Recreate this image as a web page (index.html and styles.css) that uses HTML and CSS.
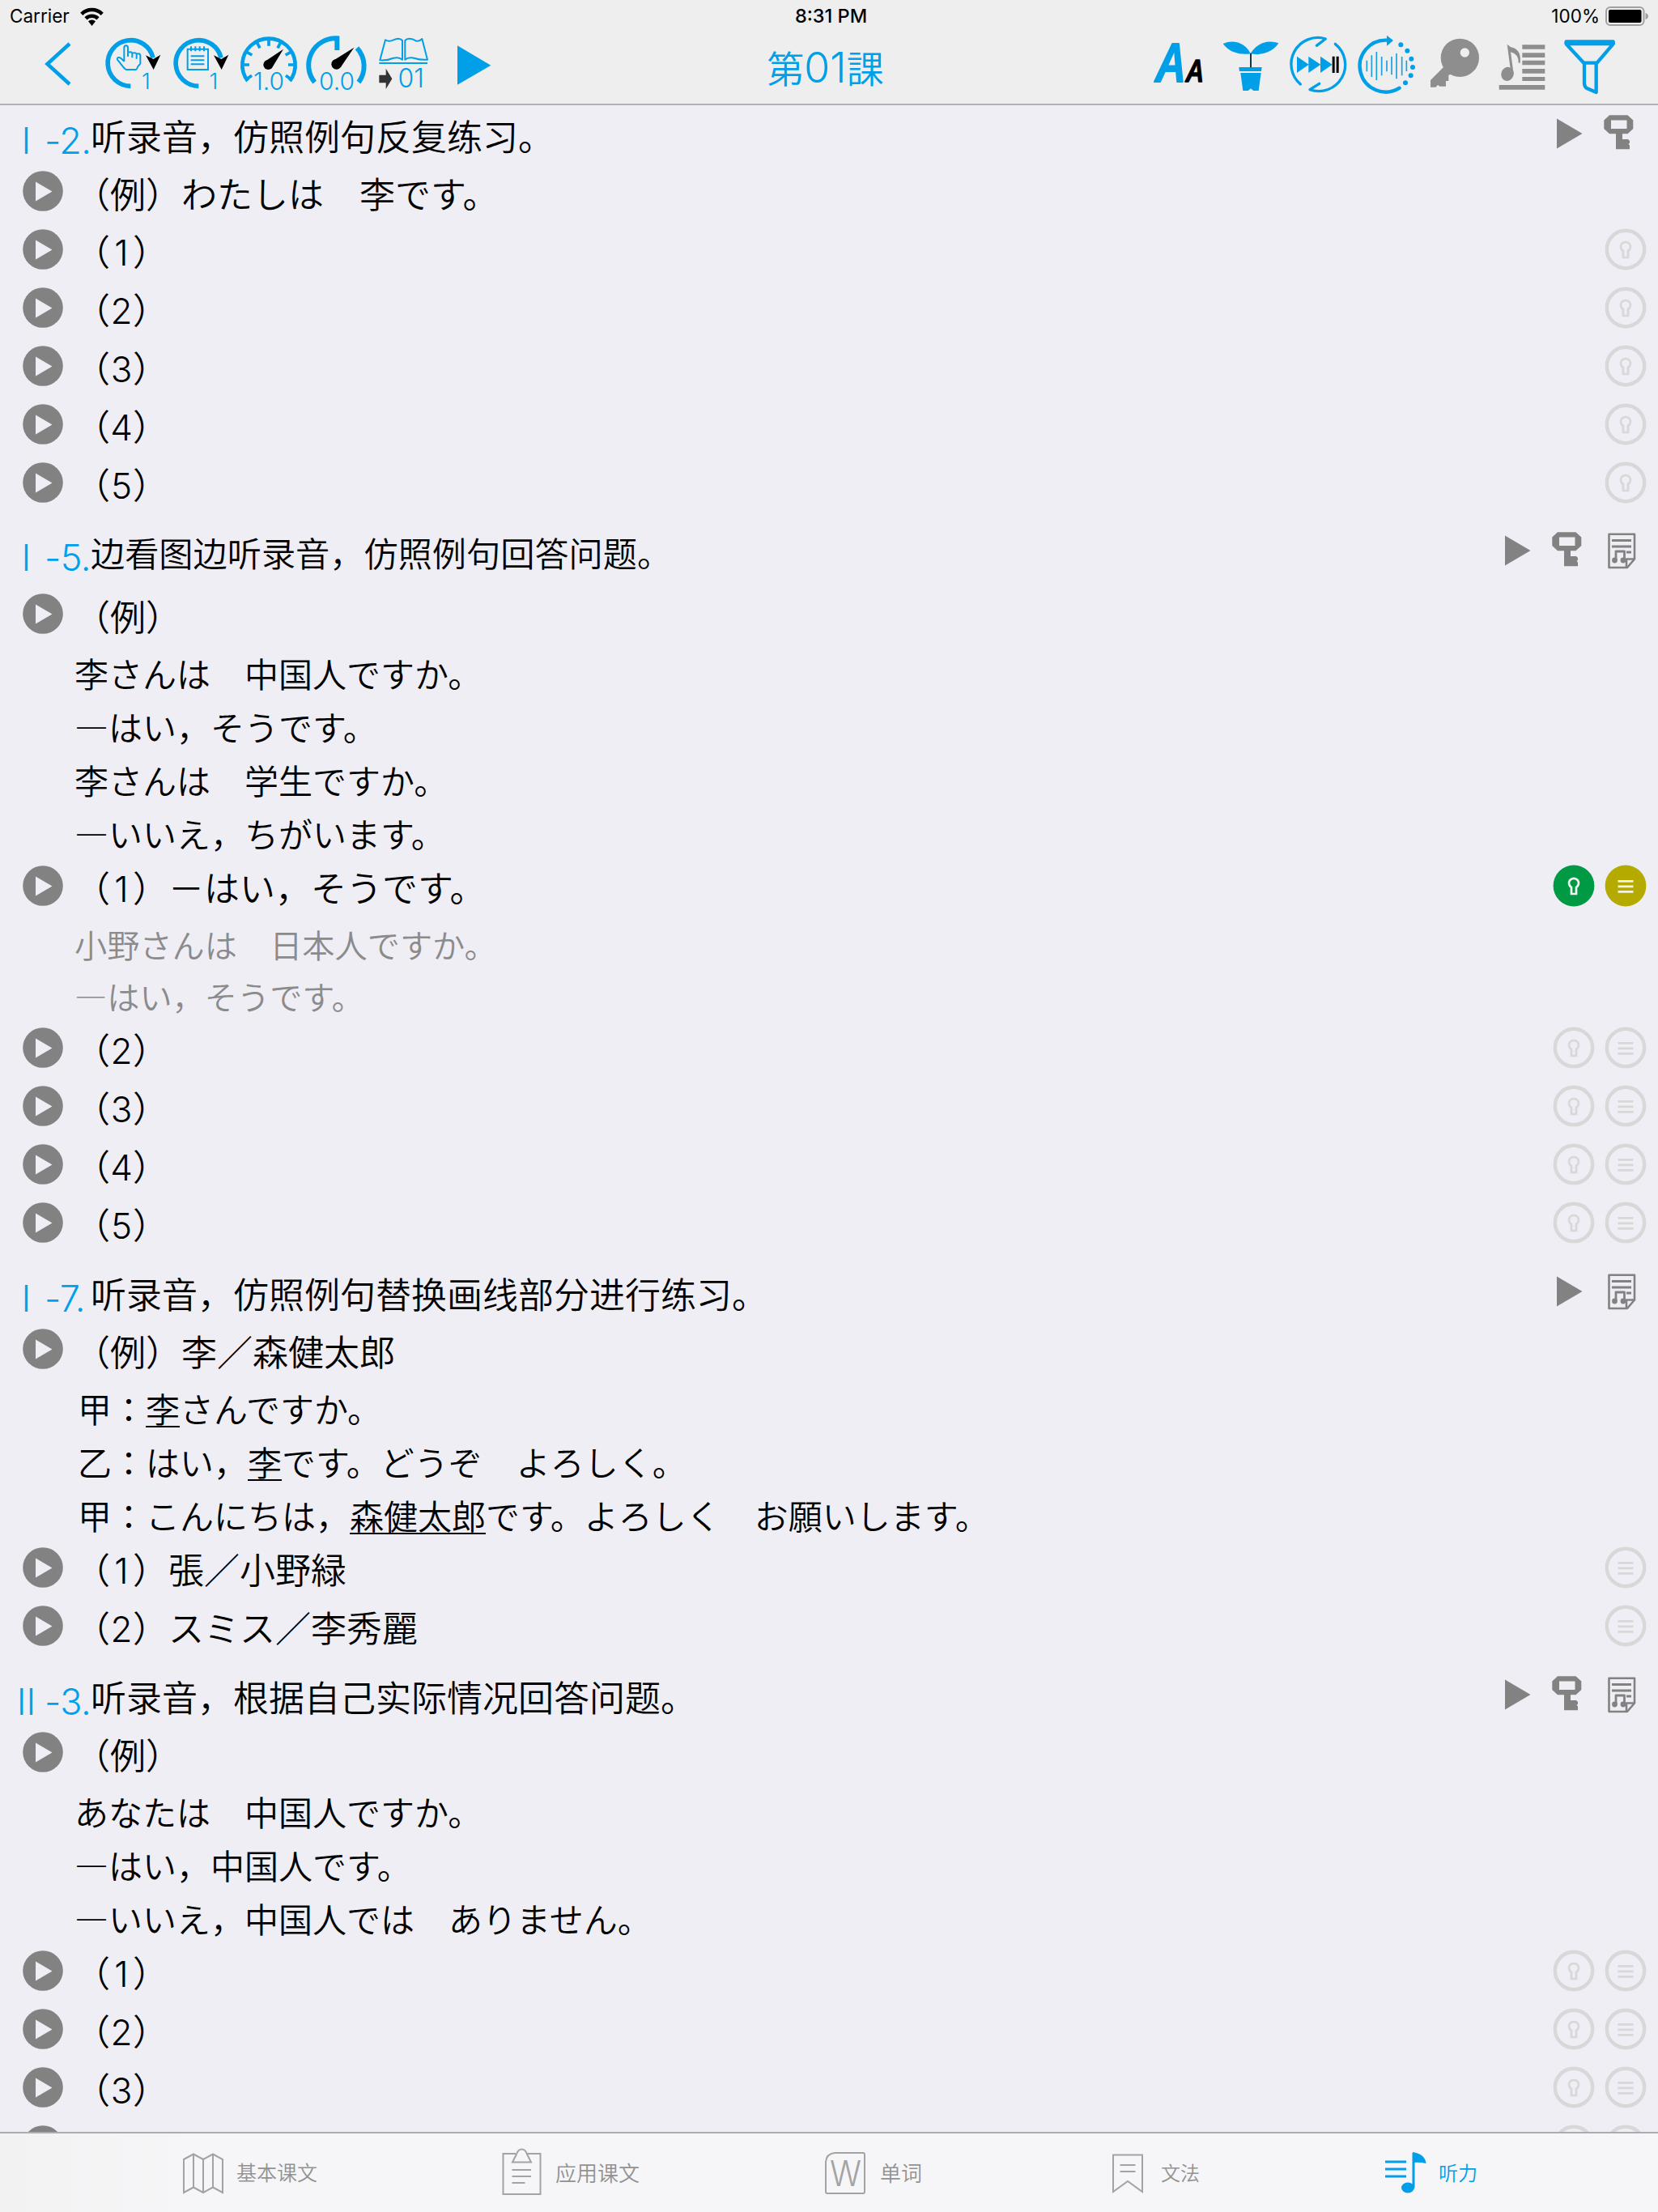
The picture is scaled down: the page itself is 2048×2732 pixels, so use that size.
FILE: index.html
```html
<!DOCTYPE html>
<html lang="ja">
<head>
<meta charset="utf-8">
<title>第01課</title>
<link rel="stylesheet" href="styles.css">
</head>
<body>
<svg class="defs" aria-hidden="true">
  <symbol id="play-round" viewBox="0 0 50 50"><circle cx="25" cy="25" r="24.8" fill="#828282"/><path d="M16 13.5 L36.5 25.5 L16 37.5Z" fill="#efeef5"/></symbol>
  <symbol id="play" viewBox="-32 -31 64 66"><path d="M-15 -18.5 L16.500 0 L-15 18.5Z" fill="#828282"/></symbol>
  <symbol id="key" viewBox="-32 -31 64 66"><path fill="#828282" fill-rule="evenodd" d="M-14 -22.8 H8.500 L15.300 -16.500 V-6 L8.500 .2 H2 V7 H9 L11 9 V11.500 L9.500 13 L11 14.500 V19.200 H-6 V.2 H-14 L-20.700 -6 V-16.500Z M-12 -16.500 V-6 H7.500 V-16.500Z"/></symbol>
  <symbol id="doc" viewBox="-32 -31 64 66"><g fill="none" stroke="#828282" stroke-width="2.600" stroke-linejoin="round"><path d="M-14.500 -20.300 H17 V10.500 L8 21 H-14.500Z"/><path d="M17 10.500 H7 V20.500" /><path d="M-11 -12.500H13M-11 -5H13M7 2H13" stroke-width="3.200"/><path d="M-6 12V1H4.500V12" stroke-width="2.800"/></g><circle cx="-7.500" cy="12" r="3.400" fill="#828282"/><circle cx="3" cy="12" r="3.400" fill="#828282"/></symbol>
  <symbol id="lock" viewBox="-32 -32 64 64"><circle r="23.200" fill="none" stroke="#d8d8d8" stroke-width="4.400"/><path d="M-3 10 V2 A6 6 0 1 1 3 2 V10Z" fill="none" stroke="#d8d8d8" stroke-width="2.700"/></symbol>
  <symbol id="lock-on" viewBox="-32 -32 64 64"><circle r="25.400" fill="#094"/><path d="M-3 10 V2 A6 6 0 1 1 3 2 V10Z" fill="none" stroke="#f0f4f0" stroke-width="2.700"/></symbol>
  <symbol id="list" viewBox="-32 -32 64 64"><circle r="23.200" fill="none" stroke="#d8d8d8" stroke-width="4.400"/><path d="M-9.500 -5.700H9.500M-9.500 .8H9.500M-9.500 7.300H9.500" stroke="#d8d8d8" stroke-width="2.700"/></symbol>
  <symbol id="list-on" viewBox="-32 -32 64 64"><circle r="25.400" fill="#b5aa00"/><path d="M-9.500 -5.700H9.500M-9.500 .8H9.500M-9.500 7.300H9.500" stroke="#f4f3e0" stroke-width="2.700"/></symbol>
</svg>

<header class="header">
  <div class="status">
    <div class="carrier">Carrier
      <svg width="29" height="25" viewBox="0 0 29 25"><g fill="none" stroke="#000" stroke-width="4.600"><path d="M1.800 9.300 A18 18 0 0 1 27.200 9.300"/><path d="M7 14.800 A10.800 10.800 0 0 1 22 14.800"/></g><path d="M10 18.300 A6.400 6.400 0 0 1 19 18.300 L14.500 24Z"/></svg>
    </div>
    <div class="time">8:31 PM</div>
    <div class="battery">100%
      <svg width="54" height="24" viewBox="0 0 54 24"><rect x="1" y="1" width="46.500" height="22" rx="5" fill="none" stroke="#a0a0a0" stroke-width="2"/><rect x="4" y="4" width="40.500" height="16" rx="2"/><path d="M49.500 8 Q53 9 53 12 Q53 15 49.500 16Z" fill="#a0a0a0"/></svg>
    </div>
  </div>
  <nav class="toolbar">
    <svg class="back" width="126" height="96" viewBox="0 0 126 96"><path d="M86 20 L58.500 45 L86 70" fill="none" stroke="#009fe8" stroke-width="4.500"/></svg>
    <svg width="80" height="96" viewBox="48 0 240 288"><path d="M154 217 A85 85 0 1 1 237 112" fill="none" stroke="#009fe8" stroke-width="17"/><path d="M210 103 L238 117 L265 101 L239 156Z"/><path d="M130 126 V75 Q130 67 137 67 Q144 67 144 75 V108 M144 92 Q158 88 160 95 V112 M160 95 Q173 91 176 98 V116 M176 98 Q190 94 190 104 V134 L180 146 Q178 156 172 156 H137 Q130 152 124 143 L105 119 Q103 110 111 111 Q119 112 130 126" fill="none" stroke="#009fe8" stroke-width="6" stroke-linejoin="round"/><text x="211" y="227" font-size="82">1</text></svg>
    <svg width="84" height="96" viewBox="288 0 252 288"><path d="M406 217 A85 85 0 1 1 489 112" fill="none" stroke="#009fe8" stroke-width="17"/><path d="M462 103 L490 117 L517 101 L491 156Z"/><path d="M365 80 H441 V156 H365Z M377 106H427M377 121H427M377 136H427M378 70V88M394 70V88M410 70V88M426 70V88" fill="none" stroke="#009fe8" stroke-width="6"/><text x="462" y="227" font-size="82">1</text></svg>
    <svg width="84" height="96" viewBox="540 0 252 288"><path d="M588 198 A98 98 0 1 1 744 198" fill="none" stroke="#009fe8" stroke-width="14"/><path d="M666 45V68M709 57L699 76M623 57L633 76M746 92L728 102M586 92L604 102M758 138H738M574 138H594M746 190L729 178M586 190L603 178" stroke="#009fe8" stroke-width="11"/><circle cx="664" cy="138" r="18"/><path d="M650 127 L720 80 L679 148Z"/><text x="666" y="230" font-size="90">1.0</text></svg>
    <svg width="84" height="96" viewBox="792 0 252 288"><path d="M836 203 A100 100 0 0 1 919 40 V84" fill="none" stroke="#009fe8" stroke-width="18"/><path d="M993 76 A100 100 0 0 1 999 203" fill="none" stroke="#009fe8" stroke-width="18"/><circle cx="917" cy="136" r="19"/><path d="M903 124 L982 74 L932 148Z"/><text x="918" y="230" font-size="90">0.0</text></svg>
    <svg width="84" height="96" viewBox="1044 0 252 288"><path d="M1078 121 L1098 46 Q1112 54 1128 46 Q1150 35 1161 48 V119 Q1148 107 1125 114 Q1105 123 1078 121Z M1254 119 L1234 42 Q1220 56 1205 46 Q1182 35 1171 48 V119 Q1184 107 1207 114 Q1227 121 1254 119Z" fill="none" stroke="#009fe8" stroke-width="6" stroke-linejoin="round"/><path d="M1075 132H1254" stroke="#009fe8" stroke-width="6"/><path d="M1075 176H1100V152L1123 190L1100 228V205H1075Z" fill="#333"/><text x="1193" y="222" font-size="96">01</text></svg>
    <svg width="68" height="96" viewBox="1296 0 204 288"><path d="M1365 67 L1489 140 L1365 212Z" fill="#009fe8"/></svg>
    <h1 class="title">第<span>01</span>課</h1>
    <svg class="letters" width="80" height="96" viewBox="0 0 240 288"><text class="big" x="80" y="201" textLength="104" lengthAdjust="spacingAndGlyphs">A</text><text class="small" x="168" y="202" textLength="62" lengthAdjust="spacingAndGlyphs">A</text></svg>
    <svg width="86" height="96" viewBox="240 0 258 288"><g fill="#009fe8"><path d="M272 60 Q300 48 330 56 Q362 68 374 97 Q340 102 312 91 Q288 82 272 60Z"/><path d="M478 58 Q450 48 420 57 Q390 68 374 97 Q410 104 438 91 Q464 80 478 58Z"/><path d="M331 147H416L414 162H333Z M337 168H413L404 234H385L375 226L365 234H346Z"/></g><path d="M375 95V148" stroke="#103848" stroke-width="6"/></svg>
    <svg width="84" height="96" viewBox="498 0 252 288"><g fill="none" stroke="#009fe8" stroke-width="10" stroke-linecap="round" stroke-linejoin="round"><path d="M559 210 A98 98 0 0 1 652 42 L619 67"/><path d="M688 61 A98 98 0 0 1 594 230 L629 208"/></g><path d="M546 107L590 137L546 168Z M589 107L634 137L589 168Z M633 107L677 137L633 168Z" fill="#009fe8"/><path d="M677 107H686V168H677Z M692 107H701V168H692Z"/></svg>
    <svg width="86" height="96" viewBox="750 0 258 288"><path d="M926 224 A96 96 0 1 1 882 47" fill="none" stroke="#009fe8" stroke-width="13" stroke-linecap="round"/><g fill="#009fe8"><path d="M879 29L903 48L879 68Z"/><circle cx="931" cy="64" r="9"/><circle cx="955" cy="86" r="9"/><circle cx="970" cy="116" r="9"/><circle cx="975" cy="147" r="9"/><circle cx="968" cy="178" r="9"/><circle cx="948" cy="205" r="9"/></g><path d="M805 122V163M823 103V183M841 90V195M860 108V178M879 122V163M897 108V175M915 96V190M935 108V178M952 122V162" stroke="#1ba0dc" stroke-width="5"/></svg>
    <svg width="84" height="96" viewBox="1008 0 252 288"><g fill="#8e8e8e"><path fill-rule="evenodd" d="M1079 112A71 71 0 0 1 1221 112A71 71 0 0 1 1079 112Z M1151 93A17 17 0 0 0 1185 93A17 17 0 0 0 1151 93Z"/><path d="M1088 148L1041 195V221H1060L1068 213L1076 218H1098V198H1108V176L1122 172Z"/></g></svg>
    <svg width="84" height="96" viewBox="1260 0 252 288"><g fill="#8e8e8e"><path d="M1381 64H1465V80H1381Z M1381 94H1465V111H1381Z M1381 122H1465V139H1381Z M1381 153H1465V170H1381Z M1381 183H1465V198H1381Z M1295 213H1465V230H1295Z"/><ellipse cx="1326" cy="172" rx="23" ry="26" transform="rotate(20 1326 172)"/><path d="M1325 62 Q1335 73 1350 76 Q1378 88 1373 131 L1367 131 Q1368 98 1338 91 L1349 172 L1338 160Z"/></g></svg>
    <svg width="80" height="96" viewBox="1512 0 240 288"><path d="M1544 52 H1718 Q1720 58 1717 62 L1658 131 H1609 L1545 62 Q1542 58 1544 52Z M1548 60H1715 M1611 131V208Q1612 221 1622 226L1655 240V131" fill="none" stroke="#009fe8" stroke-width="13" stroke-linejoin="round"/></svg>
  </nav>
</header>

<main class="content">
  <section>
    <div class="heading first"><span class="part">I</span><span class="num">-2.</span><h2 lang="zh-CN">听录音，仿照例句反复练习。</h2><svg class="hic"><use href="#play"/></svg><svg class="hic"><use href="#key"/></svg></div>
    <div class="row"><svg class="pl"><use href="#play-round"/></svg><p>（例）わたしは　李です。</p></div>
    <div class="row"><svg class="pl"><use href="#play-round"/></svg><p>（<b>1</b>）</p><svg class="ic"><use href="#lock"/></svg></div>
    <div class="row"><svg class="pl"><use href="#play-round"/></svg><p>（<b>2</b>）</p><svg class="ic"><use href="#lock"/></svg></div>
    <div class="row"><svg class="pl"><use href="#play-round"/></svg><p>（<b>3</b>）</p><svg class="ic"><use href="#lock"/></svg></div>
    <div class="row"><svg class="pl"><use href="#play-round"/></svg><p>（<b>4</b>）</p><svg class="ic"><use href="#lock"/></svg></div>
    <div class="row"><svg class="pl"><use href="#play-round"/></svg><p>（<b>5</b>）</p><svg class="ic"><use href="#lock"/></svg></div>
  </section>
  <section>
    <div class="heading tall"><span class="part">I</span><span class="num">-5.</span><h2 lang="zh-CN">边看图边听录音，仿照例句回答问题。</h2><svg class="hic"><use href="#play"/></svg><svg class="hic"><use href="#key"/></svg><svg class="hic"><use href="#doc"/></svg></div>
    <div class="row"><svg class="pl"><use href="#play-round"/></svg><p>（例）</p></div>
    <div class="lines"><p>李さんは　中国人ですか。</p><p>―はい，そうです。</p><p>李さんは　学生ですか。</p><p>―いいえ，ちがいます。</p></div>
    <div class="row"><svg class="pl"><use href="#play-round"/></svg><p>（<b>1</b>）－はい，そうです。</p><svg class="ic"><use href="#lock-on"/></svg><svg class="ic"><use href="#list-on"/></svg></div>
    <div class="lines script"><p>小野さんは　日本人ですか。</p><p>―はい，そうです。</p></div>
    <div class="row"><svg class="pl"><use href="#play-round"/></svg><p>（<b>2</b>）</p><svg class="ic"><use href="#lock"/></svg><svg class="ic"><use href="#list"/></svg></div>
    <div class="row"><svg class="pl"><use href="#play-round"/></svg><p>（<b>3</b>）</p><svg class="ic"><use href="#lock"/></svg><svg class="ic"><use href="#list"/></svg></div>
    <div class="row"><svg class="pl"><use href="#play-round"/></svg><p>（<b>4</b>）</p><svg class="ic"><use href="#lock"/></svg><svg class="ic"><use href="#list"/></svg></div>
    <div class="row"><svg class="pl"><use href="#play-round"/></svg><p>（<b>5</b>）</p><svg class="ic"><use href="#lock"/></svg><svg class="ic"><use href="#list"/></svg></div>
  </section>
  <section>
    <div class="heading"><span class="part">I</span><span class="num">-7.</span><h2 lang="zh-CN">听录音，仿照例句替换画线部分进行练习。</h2><svg class="hic"><use href="#play"/></svg><svg class="hic"><use href="#doc"/></svg></div>
    <div class="row"><svg class="pl"><use href="#play-round"/></svg><p>（例）李／森健太郎</p></div>
    <div class="lines dialog"><p>甲：<u>李</u>さんですか。</p><p>乙：はい，<u>李</u>です。どうぞ　よろしく。</p><p>甲：こんにちは，<u>森健太郎</u>です。よろしく　お願いします。</p></div>
    <div class="row"><svg class="pl"><use href="#play-round"/></svg><p>（<b>1</b>）張／小野緑</p><svg class="ic"><use href="#list"/></svg></div>
    <div class="row"><svg class="pl"><use href="#play-round"/></svg><p>（<b>2</b>）スミス／李秀麗</p><svg class="ic"><use href="#list"/></svg></div>
  </section>
  <section>
    <div class="heading"><span class="part">II</span><span class="num">-3.</span><h2 lang="zh-CN">听录音，根据自己实际情况回答问题。</h2><svg class="hic"><use href="#play"/></svg><svg class="hic"><use href="#key"/></svg><svg class="hic"><use href="#doc"/></svg></div>
    <div class="row"><svg class="pl"><use href="#play-round"/></svg><p>（例）</p></div>
    <div class="lines"><p>あなたは　中国人ですか。</p><p>―はい，中国人です。</p><p>―いいえ，中国人では　ありません。</p></div>
    <div class="row"><svg class="pl"><use href="#play-round"/></svg><p>（<b>1</b>）</p><svg class="ic"><use href="#lock"/></svg><svg class="ic"><use href="#list"/></svg></div>
    <div class="row"><svg class="pl"><use href="#play-round"/></svg><p>（<b>2</b>）</p><svg class="ic"><use href="#lock"/></svg><svg class="ic"><use href="#list"/></svg></div>
    <div class="row"><svg class="pl"><use href="#play-round"/></svg><p>（<b>3</b>）</p><svg class="ic"><use href="#lock"/></svg><svg class="ic"><use href="#list"/></svg></div>
    <div class="row"><svg class="pl"><use href="#play-round"/></svg><svg class="ic"><use href="#lock"/></svg><svg class="ic"><use href="#list"/></svg></div>
  </section>
</main>

<footer class="tabs" lang="zh-CN">
  <a class="tab t1"><svg width="50" height="60"><path d="M1 15 L13 8.500 L25 15 L37 8.500 L49 15 V56 L37 49.500 L25 56 L13 49.500 L1 56Z M13 8.500V49.500M25 15V56M37 8.500V49.500"/></svg><span>基本课文</span></a>
  <a class="tab t2"><svg width="50" height="60"><path d="M17 8 H1.500 V58 H47.500 V8 H31"/><path d="M13 18.500 L18 8.500 Q20 2.500 24.500 2.500 Q29 2.500 31 8.500 L36 18.500Z M12.500 28H36M12.500 36H36M12.500 44H28.500"/></svg><span>应用课文</span></a>
  <a class="tab t3"><svg width="50" height="60"><path d="M12 7 H47 Q49 7 49 9 V55 Q49 57 47 57 H3 Q1 57 1 55 V18 Q2 8 12 7Z"/><text x="25.500" y="48" font-size="44" textLength="39" lengthAdjust="spacingAndGlyphs">W</text></svg><span>单词</span></a>
  <a class="tab t4"><svg width="38" height="60"><path d="M1 9.500H37V55L19 42L1 55Z M9.500 22H28.500M9.500 30H28.500"/></svg><span>文法</span></a>
  <a class="tab t5"><svg width="50" height="60"><path d="M0 18H26M0 27H26M0 36H26" stroke-width="3"/><path d="M35 50V7" stroke-width="3"/><path d="M34 6 Q49 8 50.500 20 Q43 18 34 19Z" class="solid"/><ellipse cx="28" cy="50" rx="8" ry="6.500" class="solid"/></svg><span>听力</span></a>
</footer>
</body>
</html>
```
FILE: styles.css
```css
* { box-sizing: border-box; }
body {
  margin: 0;
  width: 2048px;
  height: 2732px;
  overflow: hidden;
  display: flex;
  flex-direction: column;
  background: #efeef5;
  color: #000;
  font-family: "Noto Sans CJK JP", "Noto Sans CJK SC", sans-serif;
  font-weight: 350;
  text-spacing-trim: space-all;
}
h1, h2, p { margin: 0; font-weight: inherit; }
svg { display: block; flex: none; }
[lang="zh-CN"] { font-family: "Noto Sans CJK SC", sans-serif; }
.defs { display: none; }

.header {
  flex: none;
  height: 130px;
  background: #eee;
  border-bottom: 2px solid #b1b0b5;
}
.status {
  display: grid;
  grid-template-columns: 1fr 1fr 1fr;
  align-items: center;
  height: 34px;
  padding: 6px 11px 0 12px;
  font: 400 22.500px/28px Inter, sans-serif;
  white-space: nowrap;
}
.carrier, .battery { display: flex; align-items: center; gap: 13px; height: 28px; }
.battery { justify-content: flex-end; gap: 7px; }
.time { text-align: center; padding-left: 4px; font-size: 23.500px; font-weight: 500; height: 28px; }

.toolbar { display: flex; height: 96px; padding-right: 44px; }
.toolbar text {
  font-family: Inter, sans-serif;
  font-weight: 300;
  fill: #009fe8;
  text-anchor: middle;
}
.toolbar .letters { overflow: visible; }
.toolbar .letters .big {
  font: italic 600 196px "Open Sans", sans-serif;
  stroke: #009fe8;
  stroke-width: 6;
  stroke-linejoin: round;
}
.toolbar .letters .small {
  font: italic 600 116px "Open Sans", sans-serif;
  fill: #000;
  stroke: #000;
  stroke-width: 4;
  stroke-linejoin: round;
}
.title {
  flex: 1;
  padding-left: 9px;
  text-align: center;
  color: #009fe8;
  font-size: 46px;
  line-height: 96px;
}
.title span { font: 350 52px Inter, sans-serif; }

.content { flex: 1; min-height: 0; overflow: hidden; }
.heading {
  display: flex;
  align-items: flex-end;
  height: 84px;
  padding-right: 14px;
  font-size: 44px;
  line-height: 66px;
}
.heading.first { height: 70px; }
.heading.tall { height: 90px; padding-bottom: 7px; }
.heading h2 { flex: 1; font-size: 44px; white-space: nowrap; }
.heading.tall h2 { font-size: 42.200px; }
.part, .num {
  color: #00a0ea;
  font-family: Inter, sans-serif;
  font-size: 45px;
  height: 59px;
  line-height: 66px;
}
.part { width: 55px; padding-left: 10px; text-align: center; }
.num { width: 57px; letter-spacing: -0.6px; }
.hic { width: 64px; height: 66px; }

.row {
  display: flex;
  align-items: center;
  height: 72px;
  padding: 0 8px 0 28px;
  font-size: 44px;
  line-height: 72px;
}
.row p { flex: 1; padding: 4px 0 0 14px; white-space: nowrap; }
.row b {
  display: inline-block;
  width: 28px;
  text-align: center;
  font-family: Inter, sans-serif;
  font-weight: 350;
}
.pl { width: 50px; height: 50px; }
.pl + .ic { margin-left: auto; }
.ic { width: 64px; height: 64px; }

.lines {
  padding: 4px 0 0 92px;
  margin-bottom: -4px;
  font-size: 42px;
  line-height: 66px;
  white-space: nowrap;
}
.lines.dialog { padding-left: 96px; }
.lines.script { font-size: 40.200px; line-height: 64px; color: #8b8b8b; }
.lines u {
  text-decoration-thickness: 2px;
  text-underline-offset: 4px;
  text-decoration-skip-ink: none;
}

.tabs {
  flex: none;
  display: flex;
  height: 99px;
  padding: 0 0 3px 226px;
  border-top: 2px solid #acabb0;
  background: linear-gradient(90deg, #f2f2f3, #f6f6f8 240px);
}
.tab { display: flex; align-items: center; gap: 16px; font-size: 26px; color: #929292; }
.tab svg { overflow: visible; fill: none; stroke: #a3a3a3; stroke-width: 2; }
.tab text {
  font-family: Inter, sans-serif;
  font-weight: 300;
  fill: #a3a3a3;
  stroke: none;
  text-anchor: middle;
}
.t1 { width: 394px; font-size: 25px; }
.t2 { width: 399px; }
.t3 { width: 355px; gap: 18px; }
.t4 { width: 337px; gap: 22px; font-size: 24px; }
.t5 { font-size: 24px; color: #009fe8; }
.tab.t5 svg { stroke: #009fe8; }
.t5 .solid { fill: #009fe8; stroke: none; }
```
